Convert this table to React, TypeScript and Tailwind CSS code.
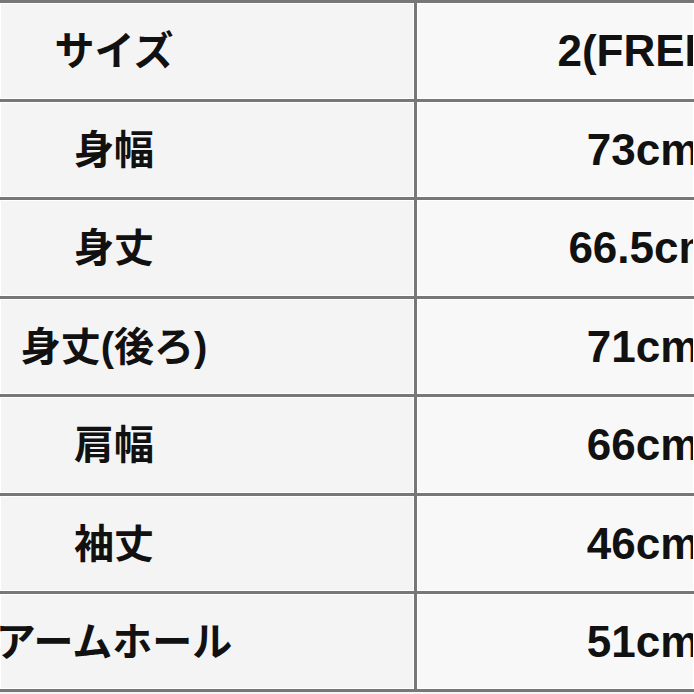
import React from "react";

const rows: { label: string; value: string; h: string }[] = [
  { label: "サイズ", value: "2(FREE)", h: "h-[99px]" },
  { label: "身幅", value: "73cm", h: "h-[98px]" },
  { label: "身丈", value: "66.5cm", h: "h-[99px]" },
  { label: "身丈(後ろ)", value: "71cm", h: "h-[98px]" },
  { label: "肩幅", value: "66cm", h: "h-[99px]" },
  { label: "袖丈", value: "46cm", h: "h-[98px]" },
  { label: "アームホール", value: "51cm", h: "h-[98px]" },
];

export default function App() {
  return (
    <div
      className="w-[694px] h-[694px] overflow-hidden bg-[#f6f6f6] text-[#111]"
      style={{ fontFamily: "'Liberation Sans', 'Noto Sans CJK JP', sans-serif" }}
    >
      <div className="flex flex-col border-t-[3px] border-[#777]">
        {rows.map((r) => (
          <div key={r.label} className={`flex border-b-[3px] border-[#777] ${r.h}`}>
            <div className="w-[414px] shrink-0 flex items-center border border-white bg-[#f4f4f4]">
              <div className="w-[226px] flex justify-center whitespace-nowrap text-[40px] font-bold leading-none">
                {r.label}
              </div>
            </div>
            <div className="w-[3px] shrink-0 bg-[#777]" />
            <div className="flex-1 overflow-hidden flex items-center border border-white bg-[#f8f8f8]">
              <div className="w-[450px] shrink-0 flex justify-center whitespace-nowrap text-[44px] font-bold leading-none">
                {r.value}
              </div>
            </div>
          </div>
        ))}
      </div>
    </div>
  );
}
